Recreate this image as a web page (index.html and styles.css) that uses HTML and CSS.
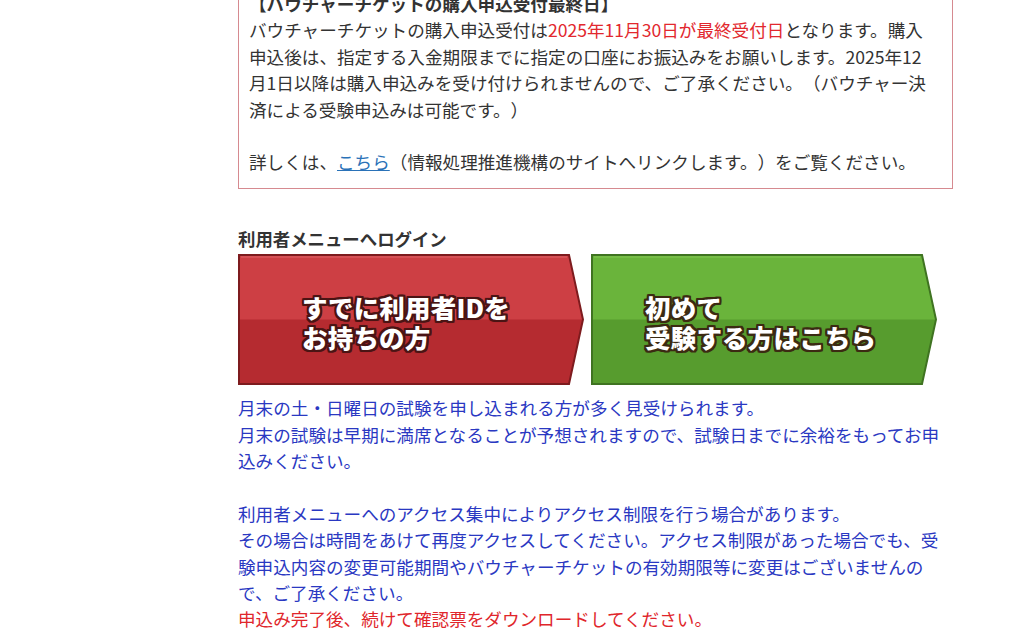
FILE: index.html
```html
<!DOCTYPE html>
<html lang="ja">
<head>
<meta charset="utf-8">
<title>受験申込</title>
<link rel="stylesheet" href="styles.css">
</head>
<body>
<main class="page">
  <section class="notice">
    <p class="notice-title">【バウチャーチケットの購入申込受付最終日】</p>
    <p class="notice-text">バウチャーチケットの購入申込受付は<span class="red">2025年11月30日が最終受付日</span>となります。購入<br>申込後は、指定する入金期限までに指定の口座にお振込みをお願いします。2025年12<br>月1日以降は購入申込みを受け付けられませんので、ご了承ください。（バウチャー決<br>済による受験申込みは可能です。）</p>
    <p class="notice-text gap">詳しくは、<a class="link" href="#">こちら</a>（情報処理推進機構のサイトへリンクします。）をご覧ください。</p>
  </section>

  <h2 class="login-title">利用者メニューへログイン</h2>
  <div class="buttons">
    <a class="btn btn-red" href="#">
      <svg class="btn-shape" width="346" height="131" viewBox="0 0 346 131">
        <polygon points="1,1 331,1 345,65.5 331,130 1,130" fill="#b52b30"/>
        <polygon points="1,1 331,1 345,65.5 1,65.5" fill="#cd3f44"/>
        <polygon points="1,1 331,1 345,65.5 331,130 1,130" fill="none" stroke="#7d1b1e" stroke-width="2"/>
        <line x1="3" y1="3" x2="329" y2="3" stroke="#d9585c" stroke-width="1.5"/>
      </svg>
      <span class="btn-label red-label">すでに利用者IDを<br>お持ちの方</span>
    </a>
    <a class="btn btn-green" href="#">
      <svg class="btn-shape" width="346" height="131" viewBox="0 0 346 131">
        <polygon points="1,1 331,1 345,65.5 331,130 1,130" fill="#579c2e"/>
        <polygon points="1,1 331,1 345,65.5 1,65.5" fill="#6ab43b"/>
        <polygon points="1,1 331,1 345,65.5 331,130 1,130" fill="none" stroke="#3f7321" stroke-width="2"/>
        <line x1="3" y1="3" x2="329" y2="3" stroke="#7cc24c" stroke-width="1.5"/>
      </svg>
      <span class="btn-label green-label">初めて<br>受験する方はこちら</span>
    </a>
  </div>

  <div class="info">
    <p class="blue">月末の土・日曜日の試験を申し込まれる方が多く見受けられます。<br>月末の試験は早期に満席となることが予想されますので、試験日までに余裕をもってお申<br>込みください。</p>
    <p class="blue gap">利用者メニューへのアクセス集中によりアクセス制限を行う場合があります。<br>その場合は時間をあけて再度アクセスしてください。アクセス制限があった場合でも、受<br>験申込内容の変更可能期間やバウチャーチケットの有効期限等に変更はございませんの<br>で、ご了承ください。</p>
    <p class="redline">申込み完了後、続けて確認票をダウンロードしてください。<br>なお、確認票は受験当日にも必要となりますので、必ず印刷して保管してください。</p>
  </div>
</main>
</body>
</html>
```

FILE: styles.css
```css
html, body {
  margin: 0;
  padding: 0;
  background: #ffffff;
}

body {
  font-family: "Noto Sans CJK JP", "Noto Sans", sans-serif;
  font-size: 17.6px;
  line-height: 26.4px;
  color: #333333;
  overflow: hidden;
  text-spacing-trim: space-all;
}

.page {
  width: 715px;
  margin-left: 238px;
  margin-top: -20px;
}

p {
  margin: 0;
}

.notice {
  border: 1px solid #d68a90;
  padding: 10px 10px 12px 10px;
}

.notice-title {
  font-weight: 700;
}

.gap {
  margin-top: 26.4px;
}

.red {
  color: #e2282e;
}

.link {
  color: #2a72b8;
  text-decoration: underline;
}

.login-title {
  margin: 37px 0 2px 0;
  font-size: 17.4px;
  font-weight: 700;
  line-height: 26.4px;
  color: #333333;
}

.buttons {
  display: flex;
  gap: 7px;
}

.btn {
  display: grid;
  width: 346px;
  height: 131px;
  text-decoration: none;
}

.btn > * {
  grid-area: 1 / 1;
}

.btn-shape {
  display: block;
}

.btn-label {
  font-family: "Noto Sans CJK JP", "Noto Sans", sans-serif;
  font-size: 25.5px;
  line-height: 30px;
  font-weight: 900;
  color: #ffffff;
  padding-top: 38px;
  letter-spacing: 0.2px;
}

.red-label {
  padding-left: 64px;
  text-shadow:
    2px 0 0 #4a1414, -2px 0 0 #4a1414, 0 2px 0 #4a1414, 0 -2px 0 #4a1414,
    2px 2px 0 #4a1414, -2px 2px 0 #4a1414, 2px -2px 0 #4a1414, -2px -2px 0 #4a1414,
    1px 2px 0 #4a1414, -1px 2px 0 #4a1414, 1px -2px 0 #4a1414, -1px -2px 0 #4a1414,
    2px 1px 0 #4a1414, -2px 1px 0 #4a1414, 2px -1px 0 #4a1414, -2px -1px 0 #4a1414,
    0 0 3px #4a1414;
}

.green-label {
  padding-left: 54px;
  text-shadow:
    2px 0 0 #3b2a12, -2px 0 0 #3b2a12, 0 2px 0 #3b2a12, 0 -2px 0 #3b2a12,
    2px 2px 0 #3b2a12, -2px 2px 0 #3b2a12, 2px -2px 0 #3b2a12, -2px -2px 0 #3b2a12,
    1px 2px 0 #3b2a12, -1px 2px 0 #3b2a12, 1px -2px 0 #3b2a12, -1px -2px 0 #3b2a12,
    2px 1px 0 #3b2a12, -2px 1px 0 #3b2a12, 2px -1px 0 #3b2a12, -2px -1px 0 #3b2a12,
    0 0 3px #3b2a12;
}

.info {
  margin-top: 10px;
}

.blue {
  color: #2a38c2;
}

.redline {
  color: #e0262b;
}
```
